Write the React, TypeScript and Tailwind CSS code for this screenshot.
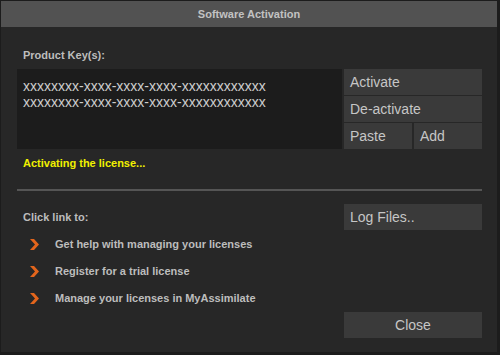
import React from "react";

const keys = [
  "xxxxxxxx-xxxx-xxxx-xxxx-xxxxxxxxxxxx",
  "xxxxxxxx-xxxx-xxxx-xxxx-xxxxxxxxxxxx",
];

const links = [
  "Get help with managing your licenses",
  "Register for a trial license",
  "Manage your licenses in MyAssimilate",
];

function Chevron() {
  return (
    <svg width="9" height="11" viewBox="0 0 9 11" className="shrink-0">
      <polygon points="0,0 4,0 9,5.5 4,11 0,11 5,5.5" fill="#e3651c" />
    </svg>
  );
}

function Btn({ label, className = "" }: { label: string; className?: string }) {
  return (
    <button
      className={`h-[26px] bg-[#3a3a3a] text-[14px] leading-none text-[#c6c6c6] text-left pl-[6px] ${className}`}
    >
      {label}
    </button>
  );
}

export default function App() {
  return (
    <div
      className="w-[500px] h-[355px] bg-[#1c1c1c] pt-px pl-px overflow-hidden"
      style={{ fontFamily: '"Liberation Sans", Arial, sans-serif' }}
    >
      <div className="w-[496px] h-[351px] bg-[#272727] flex flex-col">
        <div className="h-[26px] bg-[#525252] flex items-center justify-center text-[11px] font-bold text-[#c2c2c2]">
          Software Activation
        </div>

        <div className="flex flex-col pl-[16px] pr-[15px]">
          <div className="mt-[22px] ml-[6px] text-[11px] leading-[13px] font-bold text-[#bdbdbd]">
            Product Key(s):
          </div>

          <div className="mt-[7px] flex gap-[2px] h-[80px]">
            <div className="w-[325px] bg-[#1c1c1c] pt-[9px] pl-[6px] text-[14px] leading-[16px] text-[#cdcdcd]">
              {keys.map((k, i) => (
                <div key={i}>{k}</div>
              ))}
            </div>
            <div className="w-[138px] flex flex-col gap-px">
              <Btn label="Activate" />
              <Btn label="De-activate" />
              <div className="flex gap-[2px]">
                <Btn label="Paste" className="w-[68px]" />
                <Btn label="Add" className="w-[68px]" />
              </div>
            </div>
          </div>

          <div className="mt-[8px] ml-[6px] text-[11px] leading-[13px] font-bold text-[#f0f000]">
            Activating the license...
          </div>

          <div className="mt-[19px] h-[2px] bg-[#555555]" />

          <div className="mt-[13px] flex items-center justify-between">
            <span className="ml-[6px] text-[11px] leading-[13px] font-bold text-[#bdbdbd]">
              Click link to:
            </span>
            <Btn label="Log Files.." className="w-[138px]" />
          </div>

          <div className="mt-px flex flex-col">
            {links.map((l) => (
              <div key={l} className="h-[27px] flex items-center pl-[13px]">
                <Chevron />
                <span className="ml-[16px] text-[11px] leading-[13px] font-bold text-[#bdbdbd]">
                  {l}
                </span>
              </div>
            ))}
          </div>

          <div className="flex justify-end">
            <button className="w-[138px] h-[26px] bg-[#3a3a3a] text-[14px] leading-none text-[#c6c6c6]">
              Close
            </button>
          </div>
        </div>
      </div>
    </div>
  );
}
